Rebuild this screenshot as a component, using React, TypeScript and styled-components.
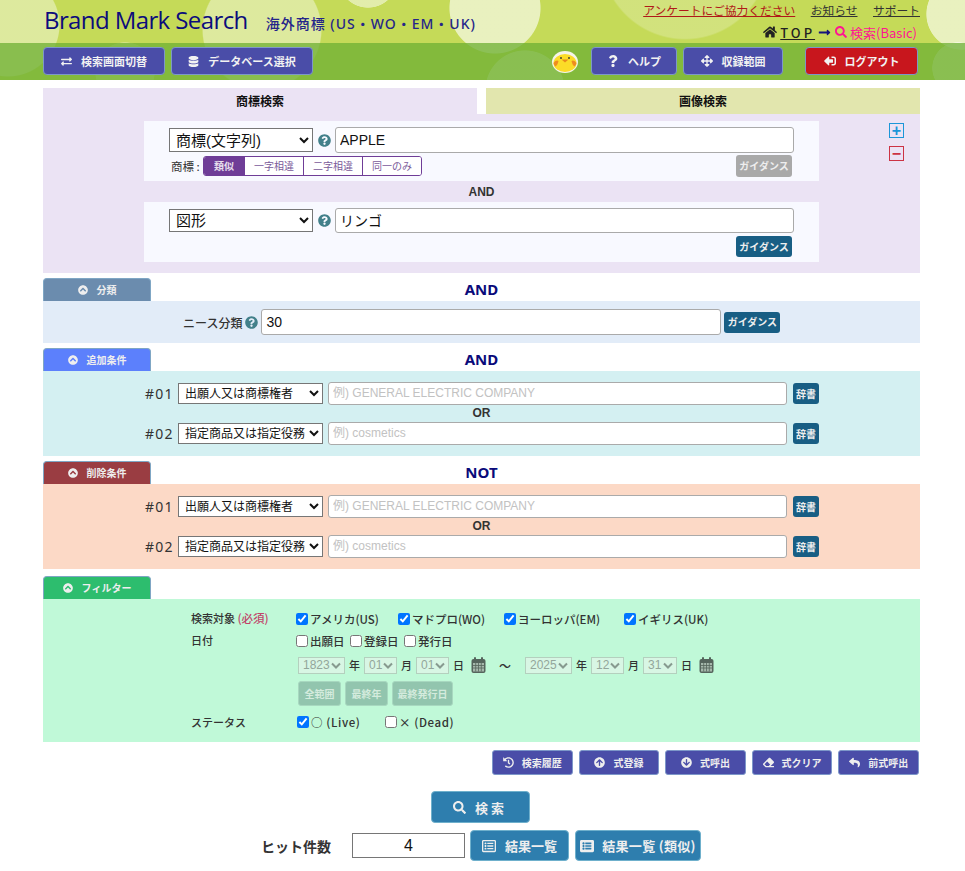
import React from "react";
import styled, { createGlobalStyle } from "styled-components";
import {
  FaExchangeAlt, FaDatabase, FaQuestion, FaArrowsAlt, FaSignOutAlt, FaSearch, FaHome,
  FaLongArrowAltRight, FaChevronCircleUp, FaQuestionCircle, FaHistory,
  FaArrowCircleUp, FaArrowCircleDown, FaEraser, FaReply, FaRegListAlt, FaListAlt,
} from "react-icons/fa";

const UI = `"Noto Sans", "Noto Sans CJK JP", sans-serif`;
const JP = `"Noto Sans CJK JP", "Noto Sans", sans-serif`;
const FORM = `"Liberation Sans", "Noto Sans CJK JP", sans-serif`;

const Global = createGlobalStyle`
  html, body { margin: 0; padding: 0; background: #fff; }
  body { font-family: ${JP}; color: #333; }
  * { box-sizing: border-box; }
`;

const Header = styled.header`
  height: 80px;
  background:
    radial-gradient(circle 46px at 495px 8px, rgba(255,255,255,.62) 98%, transparent 100%),
    radial-gradient(circle 60px at 262px 30px, rgba(255,255,255,.42) 98%, transparent 100%),
    radial-gradient(circle 52px at 8px 25px, rgba(255,255,255,.42) 98%, transparent 100%),
    radial-gradient(circle 30px at 125px 72px, rgba(255,255,255,.3) 98%, transparent 100%),
    radial-gradient(circle 40px at 525px 90px, rgba(255,255,255,.5) 98%, transparent 100%),
    radial-gradient(circle 36px at 962px 14px, rgba(255,255,255,.62) 98%, transparent 100%),
    radial-gradient(circle 26px at 958px 68px, rgba(255,255,255,.5) 98%, transparent 100%),
    radial-gradient(circle 85px at 685px -45px, rgba(255,255,255,.22) 98%, transparent 100%),
    radial-gradient(circle 30px at 368px -22px, rgba(255,255,255,.5) 98%, transparent 100%),
    #c5da58;
  display: flex;
  flex-direction: column;
`;

const TopBar = styled.div`
  height: 43px;
  padding: 0 45px 0 44px;
  display: flex;
  justify-content: space-between;
`;

const Brand = styled.div`
  display: flex;
  align-items: baseline;
  padding-top: 3px;
  color: #0c0c7c;
`;

const Logo = styled.span`
  font: 400 24px/33px "Open Sans", sans-serif;
  letter-spacing: -0.6px;
  margin-right: 18px;
`;

const Sub = styled.span`
  font: 500 14px/20px ${UI};
  letter-spacing: 1px;
  color: #25258a;
`;

const TopLinks = styled.div`
  display: flex;
  flex-direction: column;
  align-items: flex-end;
  font-size: 13px;
  line-height: 19px;
`;

const LinkRow = styled.div`
  display: flex;
  gap: 15.5px;
  height: 18px;
  align-items: center;
  font-size: 11.75px;
`;

const TopLink = styled.a<{ $red?: boolean }>`
  color: ${(p) => (p.$red ? "#b01818" : "#333")};
  text-decoration: underline;
`;

const Crumb = styled.div`
  display: flex;
  align-items: center;
  gap: 3px;
  height: 25px;
  padding-top: 3px;
  margin-right: 3px;
  color: #222;
`;

const TopCrumb = styled.a`
  color: #222;
  font-weight: 500;
  letter-spacing: 3px;
  text-decoration: underline;
`;

const Pink = styled.span`
  color: #ff1493;
  display: inline-flex;
  align-items: center;
  gap: 3px;
  margin-left: 1px;
`;

const Nav = styled.nav`
  height: 37px;
  padding: 4px 47px 0 43px;
  display: flex;
  align-items: flex-start;
  background: rgba(108, 175, 51, 0.75);
`;

const NavButton = styled.button<{ $w: number; $red?: boolean; $ml?: number }>`
  width: ${(p) => p.$w}px;
  height: 28px;
  margin-left: ${(p) => p.$ml ?? 0}px;
  padding: 0;
  background: ${(p) => (p.$red ? "#c8161d" : "#4a4da8")};
  border: 1px solid #7d97c9;
  border-radius: 4px;
  color: #f2f2f2;
  font: 700 11px/1 ${JP};
  display: inline-flex;
  align-items: center;
  justify-content: center;
  gap: 9px;
`;

const MirroredLogout = styled(FaSignOutAlt)`
  width: 12px;
  height: 12px;
  transform: scaleX(-1);
`;

const Duck = styled.svg`
  width: 26px;
  height: 22px;
  margin: 4px 13px 0 auto;
  flex: none;
`;

const Main = styled.main`
  width: 877px;
  margin: 8px 0 0 43px;
`;

const Tabs = styled.div`
  display: grid;
  grid-template-columns: 434px 434px;
  justify-content: space-between;
`;

const Tab = styled.div<{ $alt?: boolean }>`
  height: 26px;
  background: ${(p) => (p.$alt ? "#e2e6ae" : "#ebe3f4")};
  font: 700 12px/26px ${JP};
  color: #111;
  text-align: center;
`;

const TradeMarkPanel = styled.section`
  position: relative;
  height: 159px;
  background: #ebe3f4;
  padding: 7px 101px 0;
`;

const SideMark = styled.button<{ $c: string; $top: number }>`
  position: absolute;
  left: 846px;
  top: ${(p) => p.$top}px;
  width: 15px;
  height: 15px;
  padding: 0;
  background: transparent;
  border: 1px solid ${(p) => p.$c};
  color: ${(p) => p.$c};
  font: 700 16px/11px "Liberation Sans", sans-serif;
`;

const TermCard = styled.div`
  height: 60px;
  background: #f8f9ff;
  padding: 6px 27px 0 25px;
`;

const TermLine = styled.div`
  display: flex;
  align-items: center;
  gap: 5px;
  & > input { margin-left: -1px; }
`;

const NativeSelect = styled.select<{ $w: number; $h: number; $fs?: number }>`
  width: ${(p) => p.$w}px;
  height: ${(p) => p.$h}px;
  border: 1px solid #767676;
  border-radius: 0;
  background: #fff;
  color: #111;
  font: 400 ${(p) => p.$fs ?? 14}px ${FORM};
  padding: 0 0 0 2px;
  flex: none;
`;

const HelpIcon = styled(FaQuestionCircle)`
  width: 13px;
  height: 13px;
  color: #42808a;
  flex: none;
`;

const TextField = styled.input<{ $w: number; $h: number; $fs?: number }>`
  width: ${(p) => p.$w}px;
  height: ${(p) => p.$h}px;
  border: 1px solid #aaa;
  border-radius: 3px;
  background: #fff;
  color: #111;
  font: 400 ${(p) => p.$fs ?? 14}px ${FORM};
  padding: 0 4px 1px;
  flex: none;
  &::placeholder { color: #c2c2c2; opacity: 1; }
`;

const TermOptions = styled.div`
  display: flex;
  align-items: flex-start;
  justify-content: space-between;
  margin-top: 2px;
  padding-left: 2px;
`;

const OptionGroup = styled.div`
  display: flex;
  align-items: center;
  margin-top: 1px;
`;

const OptionLabel = styled.span`
  font-size: 11.5px;
  color: #333;
  width: 32px;
  white-space: nowrap;
`;

const Segment = styled.div`
  display: flex;
  border: 1px solid #6f3d97;
  border-radius: 3px;
  overflow: hidden;
  height: 20px;
`;

const SegmentItem = styled.span<{ $w: number; $on?: boolean }>`
  width: ${(p) => p.$w}px;
  background: ${(p) => (p.$on ? "#6f3d97" : "#fff")};
  color: ${(p) => (p.$on ? "#e8e0ee" : "#7a5a9a")};
  font: ${(p) => (p.$on ? 700 : 400)} 10px/18px ${JP};
  text-align: center;
  & + & { border-left: 1px solid #6f3d97; }
`;

const SmallAction = styled.button<{ $off?: boolean; $w?: number; $h?: number }>`
  width: ${(p) => p.$w ?? 56}px;
  height: ${(p) => p.$h ?? 22}px;
  padding: 0;
  border: 0;
  border-radius: 3px;
  background: ${(p) => (p.$off ? "#a9a9a9" : "#185e84")};
  color: #eee;
  font: 700 10px/1 ${JP};
  flex: none;
`;

const RightAction = styled.div`
  display: flex;
  justify-content: flex-end;
  margin-top: 3px;
`;

const AndLabel = styled.div`
  height: 21px;
  text-align: center;
  font: 700 12px/23px "Liberation Sans", sans-serif;
  color: #333;
`;

const SectionHead = styled.div<{ $mt?: number }>`
  position: relative;
  height: 23px;
  margin-top: ${(p) => p.$mt ?? 5}px;
`;

const Toggle = styled.button<{ $bg: string }>`
  position: absolute;
  left: 0;
  top: 0;
  width: 108px;
  height: 23px;
  padding: 0;
  background: ${(p) => p.$bg};
  border: 1px solid #7fa6c4;
  border-bottom: 0;
  border-radius: 4px 4px 0 0;
  color: #eee;
  font: 700 10px/1 ${JP};
  display: flex;
  align-items: center;
  justify-content: center;
  gap: 9px;
  svg { width: 10px; height: 10px; }
`;

const Operator = styled.div`
  text-align: center;
  font: 700 15px/23px ${UI};
  color: #0a0a7a;
`;

const Band = styled.section<{ $bg: string; $h: number }>`
  height: ${(p) => p.$h}px;
  background: ${(p) => p.$bg};
`;

const NiceRow = styled.div`
  display: flex;
  align-items: center;
  height: 42px;
  padding: 0 0 0 140px;
  gap: 3px;
`;

const NiceLabel = styled.span`
  font-size: 12px;
  font-weight: 500;
  color: #333;
`;

const ConditionRow = styled.div`
  display: flex;
  align-items: center;
  gap: 5px;
  padding-left: 102px;
  height: 23px;
`;

const RowNum = styled.span`
  width: 28px;
  font: 400 14px "Noto Sans", sans-serif;
  letter-spacing: 1.2px;
  color: #333;
  white-space: nowrap;
`;

const OrLabel = styled.div`
  height: 17px;
  text-align: center;
  font: 700 12px/17px "Liberation Sans", sans-serif;
  color: #333;
`;

const ConditionStack = styled.div`
  padding-top: 11px;
`;

const DictButton = styled(SmallAction)`
  margin-left: 1px;
`;

const FilterGrid = styled.div`
  display: grid;
  grid-template-columns: 105px 1fr;
  padding: 9px 0 0 148px;
  font-size: 11px;
  color: #333;
`;

const FilterLabel = styled.div<{ $h?: number }>`
  height: ${(p) => p.$h ?? 22}px;
  line-height: ${(p) => p.$h ?? 20}px;
  font-weight: 500;
`;

const Required = styled.span`
  color: #c0446a;
  font-size: 11.5px;
`;

const FilterLine = styled.div<{ $h: number; $col2?: boolean; $pl?: number }>`
  display: flex;
  align-items: center;
  height: ${(p) => p.$h}px;
  padding-left: ${(p) => p.$pl ?? 0}px;
  grid-column: ${(p) => (p.$col2 ? 2 : "auto")};
`;

const CheckItem = styled.label<{ $w?: number; $ls?: number }>`
  display: inline-flex;
  align-items: center;
  gap: 2px;
  width: ${(p) => (p.$w ? `${p.$w}px` : "auto")};
  font-size: 11.5px;
  font-weight: 500;
  letter-spacing: ${(p) => p.$ls ?? 0}px;
  white-space: nowrap;
  margin-right: ${(p) => (p.$w ? 0 : 5.5)}px;
`;

const Check = styled.input`
  width: 12px;
  height: 12px;
  margin: 0;
  flex: none;
`;

const DateGroup = styled.div`
  display: flex;
  align-items: center;
  padding-left: 2px;
  font-size: 11px;
  font-weight: 500;
`;

const DateSelect = styled.select<{ $w: number }>`
  appearance: none;
  width: ${(p) => p.$w}px;
  height: 17px;
  border: 1px solid #b4d0be;
  border-radius: 0;
  background-color: #d8f6e4;
  background-image: url("data:image/svg+xml,%3Csvg xmlns='http://www.w3.org/2000/svg' width='10' height='7'%3E%3Cpath d='M1 1.500l4 4 4-4' fill='none' stroke='%23879a8f' stroke-width='2'/%3E%3C/svg%3E");
  background-repeat: no-repeat;
  background-position: right 3px center;
  color: #93a69b;
  opacity: 1;
  font: 400 12px "Liberation Sans", sans-serif;
  padding: 0 0 0 4px;
  margin-right: 4px;
  flex: none;
`;

const DateUnit = styled.span<{ $mr?: number }>`
  margin-right: ${(p) => p.$mr ?? 4}px;
`;

const Calendar = styled.svg`
  width: 15px;
  height: 16px;
  flex: none;
`;

const Tilde = styled.span`
  margin: 0 14px 0 13px;
  font-size: 12px;
`;

const QuickButtons = styled.div`
  display: flex;
  gap: 4px;
  padding-left: 2px;
`;

const QuickButton = styled.button<{ $w: number }>`
  width: ${(p) => p.$w}px;
  height: 25px;
  padding: 0;
  border: 1px solid #a8d8c0;
  border-radius: 3px;
  background: #92c5ae;
  color: #d4ebdd;
  font: 700 10px/1 ${JP};
`;

const ToolRow = styled.div`
  display: flex;
  justify-content: flex-end;
  gap: 6px;
  margin: 8px 1px 0 0;
`;

const ToolButton = styled.button`
  width: 80.6px;
  height: 25px;
  padding: 0;
  background: #4a4da8;
  border: 1px solid #7d97c9;
  border-radius: 3px;
  color: #eee;
  font: 700 10px/1 ${JP};
  display: inline-flex;
  align-items: center;
  justify-content: center;
  gap: 8px;
  svg { width: 11px; height: 11px; }
`;

const SearchRow = styled.div`
  display: flex;
  justify-content: center;
  margin: 16px 0 0 -3px;
`;

const MainButton = styled.button<{ $w: number; $h: number; $ls?: number; $ml?: number; $gap?: number }>`
  width: ${(p) => p.$w}px;
  height: ${(p) => p.$h}px;
  margin-left: ${(p) => p.$ml ?? 0}px;
  padding: 0;
  background: #2e7eae;
  border: 1px solid #6fb0cc;
  border-radius: 4px;
  color: #eee;
  font: 700 13px/1 ${JP};
  letter-spacing: ${(p) => p.$ls ?? 0}px;
  display: inline-flex;
  align-items: center;
  justify-content: center;
  gap: ${(p) => p.$gap ?? 9}px;
`;

const HitsRow = styled.div`
  display: flex;
  align-items: center;
  margin: 7px 0 0 218px;
`;

const HitsLabel = styled.span`
  width: 91px;
  font: 700 14px ${JP};
  color: #333;
`;

const HitsValue = styled.input`
  width: 113px;
  height: 25px;
  border: 1px solid #767676;
  text-align: center;
  font: 400 16px "Liberation Sans", sans-serif;
  color: #111;
  padding: 0;
  margin-right: 5px;
`;

const Dt = ({ w, v }: { w: number; v: string }) => (
  <DateSelect $w={w} disabled defaultValue={v}>
    <option>{v}</option>
  </DateSelect>
);

const CalendarGlyph = () => (
  <Calendar viewBox="0 0 15 16">
    <rect x="0.5" y="2" width="14" height="14" rx="2" fill="#55645c" />
    <rect x="3" y="0" width="2" height="4" rx="1" fill="#55645c" />
    <rect x="10" y="0" width="2" height="4" rx="1" fill="#55645c" />
    <rect x="2" y="6" width="11" height="8.500" fill="#a6b8ac" />
    <path d="M2 8.500h11M2 11h11M4.700 6v8.500M7.500 6v8.500M10.300 6v8.500" stroke="#55645c" strokeWidth=".8" />
  </Calendar>
);

const Condition = ({ n, sel, ph }: { n: string; sel: string; ph: string }) => (
  <ConditionRow>
    <RowNum>{n}</RowNum>
    <NativeSelect $w={145} $h={21} $fs={12} defaultValue={sel}>
      <option>{sel}</option>
    </NativeSelect>
    <TextField $w={459} $h={23} $fs={12} placeholder={ph} />
    <DictButton $w={26} $h={21}>辞書</DictButton>
  </ConditionRow>
);

const Conditions = () => (
  <ConditionStack>
    <Condition n="#01" sel="出願人又は商標権者" ph="例) GENERAL ELECTRIC COMPANY" />
    <OrLabel>OR</OrLabel>
    <Condition n="#02" sel="指定商品又は指定役務" ph="例) cosmetics" />
  </ConditionStack>
);

export default function App() {
  return (
    <>
      <Global />
      <Header>
        <TopBar>
          <Brand>
            <Logo>Brand Mark Search</Logo>
            <Sub>海外商標 (US・WO・EM・UK)</Sub>
          </Brand>
          <TopLinks>
            <LinkRow>
              <TopLink $red href="#">アンケートにご協力ください</TopLink>
              <TopLink href="#">お知らせ</TopLink>
              <TopLink href="#">サポート</TopLink>
            </LinkRow>
            <Crumb>
              <FaHome size={14} />
              <TopCrumb href="#">TOP</TopCrumb>
              <FaLongArrowAltRight size={13} color="#14147c" />
              <Pink><FaSearch size={12} />検索(Basic)</Pink>
            </Crumb>
          </TopLinks>
        </TopBar>
        <Nav>
          <NavButton $w={122}><FaExchangeAlt size={11} />検索画面切替</NavButton>
          <NavButton $w={142} $ml={6}><FaDatabase size={11} />データベース選択</NavButton>
          <Duck viewBox="0 0 26 22">
            <ellipse cx="13" cy="11" rx="13" ry="11" fill="#f4f4ea" />
            <ellipse cx="13" cy="12" rx="11.5" ry="9" fill="#fbdc28" />
            <path d="M1.500 12c2-3 4-3 5-2-.5 3-2 5-3 5.500-1-.8-1.700-2-2-3.500zM24.500 12c-2-3-4-3-5-2 .5 3 2 5 3 5.500 1-.8 1.700-2 2-3.500z" fill="#ee8c20" />
            <circle cx="9" cy="7" r=".9" fill="#333" />
            <circle cx="17" cy="7" r=".9" fill="#333" />
            <path d="M9.500 8.500h7l-3.500 3z" fill="#e88a1c" />
          </Duck>
          <NavButton $w={86}><FaQuestion size={12} />ヘルプ</NavButton>
          <NavButton $w={100} $ml={6}><FaArrowsAlt size={12} />収録範囲</NavButton>
          <NavButton $w={113} $ml={22} $red><MirroredLogout />ログアウト</NavButton>
        </Nav>
      </Header>
      <Main>
        <Tabs>
          <Tab>商標検索</Tab>
          <Tab $alt>画像検索</Tab>
        </Tabs>
        <TradeMarkPanel>
          <SideMark $c="#1c96d8" $top={9}>+</SideMark>
          <SideMark $c="#cc3344" $top={32}>−</SideMark>
          <TermCard>
            <TermLine>
              <NativeSelect $w={144} $h={24} $fs={15} defaultValue="商標(文字列)">
                <option>商標(文字列)</option>
              </NativeSelect>
              <HelpIcon />
              <TextField $w={459} $h={26} defaultValue="APPLE" />
            </TermLine>
            <TermOptions>
              <OptionGroup>
                <OptionLabel>商標 :</OptionLabel>
                <Segment>
                  <SegmentItem $w={40} $on>類似</SegmentItem>
                  <SegmentItem $w={59}>一字相違</SegmentItem>
                  <SegmentItem $w={59}>二字相違</SegmentItem>
                  <SegmentItem $w={59}>同一のみ</SegmentItem>
                </Segment>
              </OptionGroup>
              <SmallAction $off>ガイダンス</SmallAction>
            </TermOptions>
          </TermCard>
          <AndLabel>AND</AndLabel>
          <TermCard>
            <TermLine>
              <NativeSelect $w={144} $h={23} $fs={15} defaultValue="図形">
                <option>図形</option>
              </NativeSelect>
              <HelpIcon />
              <TextField $w={459} $h={25} defaultValue="リンゴ" />
            </TermLine>
            <RightAction><SmallAction $h={21}>ガイダンス</SmallAction></RightAction>
          </TermCard>
        </TradeMarkPanel>

        <SectionHead>
          <Toggle $bg="#6b8cae"><FaChevronCircleUp />分類</Toggle>
          <Operator>AND</Operator>
        </SectionHead>
        <Band $bg="#e2ecf8" $h={42}>
          <NiceRow>
            <NiceLabel>ニース分類</NiceLabel>
            <HelpIcon />
            <TextField $w={460} $h={26} defaultValue="30" />
            <SmallAction $h={21}>ガイダンス</SmallAction>
          </NiceRow>
        </Band>

        <SectionHead>
          <Toggle $bg="#5c80fc"><FaChevronCircleUp />追加条件</Toggle>
          <Operator>AND</Operator>
        </SectionHead>
        <Band $bg="#d4f0f2" $h={85}><Conditions /></Band>

        <SectionHead>
          <Toggle $bg="#9a3d42"><FaChevronCircleUp />削除条件</Toggle>
          <Operator>NOT</Operator>
        </SectionHead>
        <Band $bg="#fcd9c6" $h={85}><Conditions /></Band>

        <SectionHead $mt={7}>
          <Toggle $bg="#2dbd6e"><FaChevronCircleUp />フィルター</Toggle>
        </SectionHead>
        <Band $bg="#c0f9d8" $h={143}>
          <FilterGrid>
            <FilterLabel>検索対象 <Required>(必須)</Required></FilterLabel>
            <FilterLine $h={22}>
              <CheckItem $w={102}><Check type="checkbox" defaultChecked />アメリカ(US)</CheckItem>
              <CheckItem $w={106}><Check type="checkbox" defaultChecked />マドプロ(WO)</CheckItem>
              <CheckItem $w={120}><Check type="checkbox" defaultChecked />ヨーロッパ(EM)</CheckItem>
              <CheckItem><Check type="checkbox" defaultChecked />イギリス(UK)</CheckItem>
            </FilterLine>
            <FilterLabel>日付</FilterLabel>
            <FilterLine $h={22}>
              <CheckItem><Check type="checkbox" />出願日</CheckItem>
              <CheckItem><Check type="checkbox" />登録日</CheckItem>
              <CheckItem><Check type="checkbox" />発行日</CheckItem>
            </FilterLine>
            <FilterLine $h={26} $col2>
              <DateGroup>
                <Dt w={47} v="1823" /><DateUnit>年</DateUnit>
                <Dt w={33} v="01" /><DateUnit>月</DateUnit>
                <Dt w={33} v="01" /><DateUnit $mr={7}>日</DateUnit>
                <CalendarGlyph />
                <Tilde>～</Tilde>
                <Dt w={47} v="2025" /><DateUnit>年</DateUnit>
                <Dt w={33} v="12" /><DateUnit>月</DateUnit>
                <Dt w={34} v="31" /><DateUnit $mr={7}>日</DateUnit>
                <CalendarGlyph />
              </DateGroup>
            </FilterLine>
            <FilterLine $h={31} $col2>
              <QuickButtons>
                <QuickButton $w={43}>全範囲</QuickButton>
                <QuickButton $w={43}>最終年</QuickButton>
                <QuickButton $w={61}>最終発行日</QuickButton>
              </QuickButtons>
            </FilterLine>
            <FilterLabel $h={26}>ステータス</FilterLabel>
            <FilterLine $h={26} $pl={1}>
              <CheckItem $w={88} $ls={0.6}><Check type="checkbox" defaultChecked />○ (Live)</CheckItem>
              <CheckItem $ls={0.6}><Check type="checkbox" />× (Dead)</CheckItem>
            </FilterLine>
          </FilterGrid>
        </Band>

        <ToolRow>
          <ToolButton><FaHistory />検索履歴</ToolButton>
          <ToolButton><FaArrowCircleUp />式登録</ToolButton>
          <ToolButton><FaArrowCircleDown />式呼出</ToolButton>
          <ToolButton><FaEraser />式クリア</ToolButton>
          <ToolButton><FaReply />前式呼出</ToolButton>
        </ToolRow>

        <SearchRow>
          <MainButton $w={99} $h={32} $ls={3}><FaSearch size={13} />検索</MainButton>
        </SearchRow>
        <HitsRow>
          <HitsLabel>ヒット件数</HitsLabel>
          <HitsValue defaultValue="4" />
          <MainButton $w={99} $h={31}><FaRegListAlt size={14} />結果一覧</MainButton>
          <MainButton $w={126} $h={31} $ml={6} $gap={8} $ls={0.3}><FaListAlt size={14} />結果一覧 (類似)</MainButton>
        </HitsRow>
      </Main>
    </>
  );
}
